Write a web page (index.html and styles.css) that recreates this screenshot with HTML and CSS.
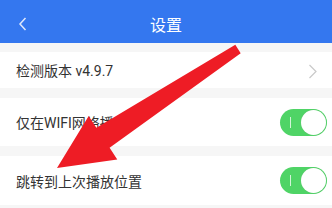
FILE: index.html
```html
<!DOCTYPE html>
<html lang="zh">
<head>
<meta charset="utf-8">
<link rel="stylesheet" href="styles.css">
</head>
<body>
<div class="page">
  <header class="bar">
    <svg class="back" width="10" height="14" viewBox="0 0 10 14"><path d="M7.5 1 L2 7 L7.5 13" fill="none" stroke="#dfe8fb" stroke-width="1.5"/></svg>
    <div class="title">设置</div>
    <div></div>
  </header>
  <div class="gap g1"></div>
  <div class="row r1">
    <span class="label">检测版本 v4.9.7</span>
    <svg class="chev" width="10" height="15" viewBox="0 0 10 15"><path d="M1.5 1 L8 7.5 L1.5 14" fill="none" stroke="#c9c9c9" stroke-width="1.2"/></svg>
  </div>
  <div class="gap"></div>
  <div class="row r2">
    <span class="label">仅在WIFI网络播放</span>
    <span class="toggle"><i class="tick"></i><i class="knob"></i></span>
  </div>
  <div class="gap"></div>
  <div class="row r3">
    <span class="label">跳转到上次播放位置</span>
    <span class="toggle"><i class="tick"></i><i class="knob"></i></span>
  </div>
  <svg class="arrow" width="332" height="208" viewBox="0 0 332 208">
    <polygon fill="#ee1c25" points="57,168 88.7,116.1 96.4,127.8 235.3,44.8 240.7,53.2 109.6,147.8 117.3,159.5"/>
  </svg>
</div>
</body>
</html>
```
FILE: styles.css
```css
html, body {
  margin: 0;
  padding: 0;
  background: #f6f6f6;
}
.page {
  position: relative;
  width: 332px;
  height: 208px;
  overflow: hidden;
  font-family: "Roboto", "Noto Sans CJK SC", sans-serif;
}
.bar {
  height: 43px;
  background: #3477ef;
  display: grid;
  grid-template-columns: 60px 1fr 60px;
  align-items: center;
  box-sizing: border-box;
  padding-top: 5px;
}
.back {
  margin-left: 18px;
}
.title {
  text-align: center;
  color: #ffffff;
  font-size: 16px;
  font-family: "Noto Sans CJK SC", sans-serif;
}
.gap {
  height: 10px;
}
.g1 {
  height: 9px;
}
.row {
  background: #ffffff;
  display: flex;
  align-items: center;
  justify-content: space-between;
  padding: 0 5px 0 16px;
}
.r1 { height: 36px; padding-right: 14px; }
.r2 { height: 48px; }
.r3 { height: 49px; }
.label {
  font-size: 14px;
  color: #333333;
}
.chev {
  margin-top: 2px;
}
.toggle {
  position: relative;
  width: 47px;
  height: 27px;
  border-radius: 14px;
  background: #4fd466;
  display: block;
}
.tick {
  position: absolute;
  left: 10px;
  top: 8px;
  width: 1px;
  height: 11px;
  background: rgba(255,255,255,0.75);
}
.knob {
  position: absolute;
  right: 1px;
  top: 1px;
  width: 25px;
  height: 25px;
  border-radius: 50%;
  background: #ffffff;
  box-shadow: 0 0 0 0.5px #5cc96e;
}
.arrow {
  position: absolute;
  left: 0;
  top: 0;
}
```
